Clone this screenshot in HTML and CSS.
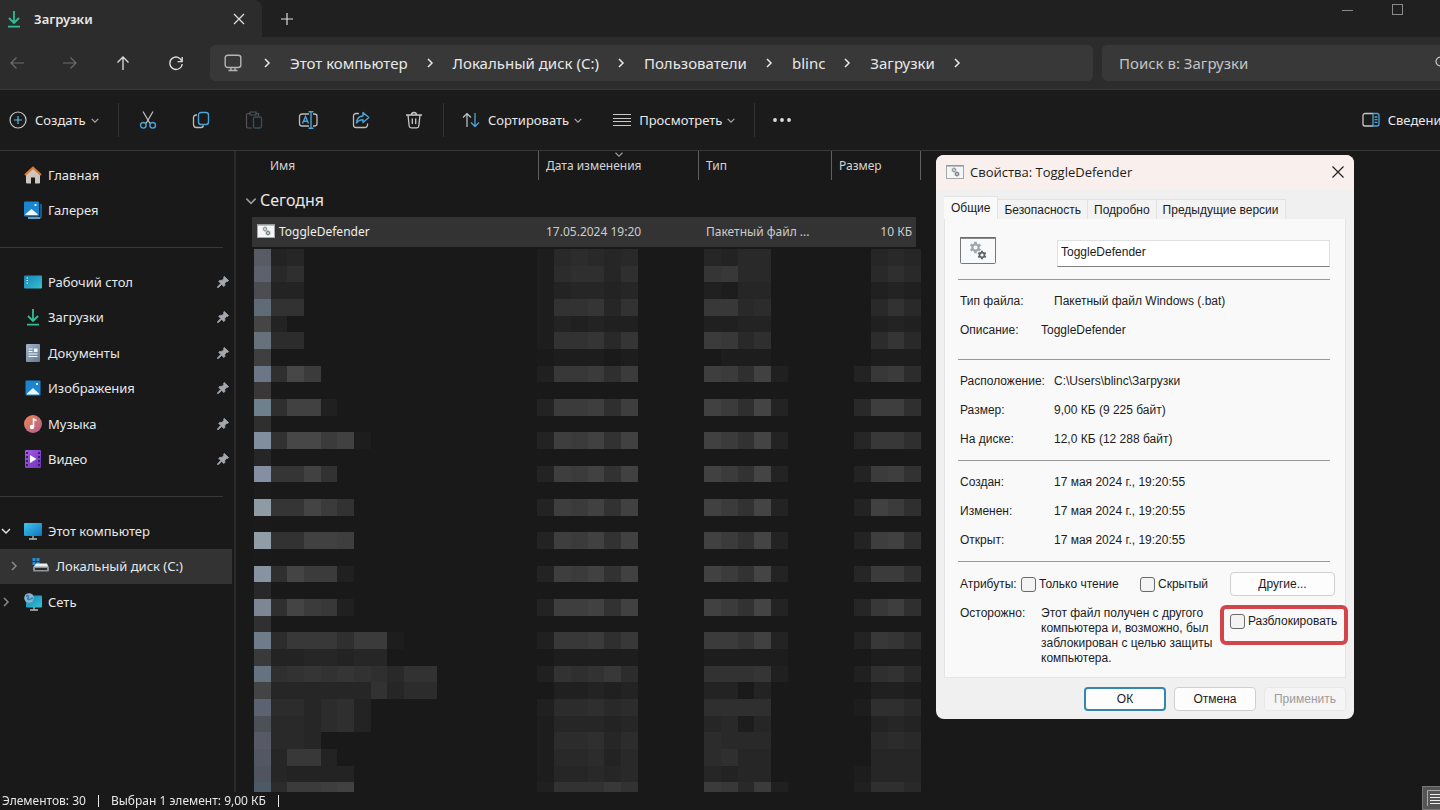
FILE: index.html
```html
<!DOCTYPE html>
<html lang="ru">
<head>
    <meta charset="UTF-8">
    <meta name="viewport" content="width=device-width, initial-scale=1.0">
    <title>Загрузки</title>
    <link rel="stylesheet" href="styles.css">
</head>
<body>
    <!-- shared icons -->
    <svg class="defs" aria-hidden="true">
        <defs>
            <linearGradient id="blueGrad" x1="0" y1="0" x2="1" y2="1">
                <stop offset="0" stop-color="#3fc8ea"/>
                <stop offset="1" stop-color="#0f72c0"/>
            </linearGradient>
            <linearGradient id="tealGrad" x1="0" y1="0" x2="1" y2="1">
                <stop offset="0" stop-color="#1683b5"/>
                <stop offset="1" stop-color="#35c2d4"/>
            </linearGradient>
            <linearGradient id="musicGrad" x1="0" y1="0" x2="1" y2="1">
                <stop offset="0" stop-color="#ee8a55"/>
                <stop offset="1" stop-color="#b05a90"/>
            </linearGradient>
            <linearGradient id="docGrad" x1="0" y1="0" x2="1" y2="1">
                <stop offset="0" stop-color="#a3b5cb"/>
                <stop offset="1" stop-color="#66788f"/>
            </linearGradient>
            <linearGradient id="videoGrad" x1="0" y1="0" x2="1" y2="1">
                <stop offset="0" stop-color="#a65ce8"/>
                <stop offset="1" stop-color="#6c35b5"/>
            </linearGradient>
            <symbol id="chevron-right" viewBox="0 0 8 12"><path d="M2 2l4 4-4 4" fill="none" stroke="currentColor" stroke-width="1.5"/></symbol>
            <symbol id="chevron-down" viewBox="0 0 12 8"><path d="M2 2l4 4 4-4" fill="none" stroke="currentColor" stroke-width="1.4"/></symbol>
            <symbol id="download" viewBox="0 0 18 18"><path d="M9 1v11M4 8l5 5 5-5M3 16.7h12" fill="none" stroke="#2fbf97" stroke-width="1.8"/></symbol>
            <symbol id="pin" viewBox="0 0 12 12"><path d="M7.2 0.4l4.4 4.2-1 .8-.8-.1-2 2 .1 2.2-1 1-2.2-2.1L1.4 11.6l-.9.1.1-.9L3.7 7.4 1.7 5.3l.9-.9 2.400 0 1.800-1.900-.2-1.100z" fill="#a2a8ae" stroke="#a2a8ae" stroke-width="0.8"/></symbol>
            <symbol id="gear" viewBox="-6 -6 12 12">
                <path d="M0-5.200V5.200M-4.500-2.600L4.500 2.600M-4.500 2.600L4.500-2.600" stroke="currentColor" stroke-width="2.400"/>
                <circle r="2.900" fill="#f5f7f8" stroke="currentColor" stroke-width="2"/>
            </symbol>
            <symbol id="batch" viewBox="0 0 18 14">
                <rect x="0.500" y="0.500" width="17" height="13" fill="#f4f6f7" stroke="#a5a8aa"/>
                <path d="M0.500 1h17" stroke="#85898c"/>
                <use href="#gear" x="5" y="2" width="6" height="6" color="#8b9297"/>
                <use href="#gear" x="8" y="6" width="6" height="6" color="#6d7378"/>
            </symbol>
        </defs>
    </svg>

    <div class="window">
        <header class="titlebar">
            <div class="tab">
                <svg class="icon-18"><use href="#download"/></svg>
                <span class="tab-title">Загрузки</span>
                <button class="plain" aria-label="Закрыть вкладку">
                    <svg width="12" height="12" viewBox="0 0 12 12"><path d="M1 1l10 10M11 1L1 11" stroke="#ddd" stroke-width="1.3"/></svg>
                </button>
            </div>
            <button class="plain new-tab" aria-label="Новая вкладка">
                <svg width="12" height="12" viewBox="0 0 12 12"><path d="M6 0v12M0 6h12" stroke="#ddd" stroke-width="1.2"/></svg>
            </button>
            <div class="window-buttons">
                <button class="plain" aria-label="Свернуть"><svg width="12" height="12" viewBox="0 0 12 12"><path d="M0 6.500h11" stroke="#8a8a8a"/></svg></button>
                <button class="plain" aria-label="Развернуть"><svg width="12" height="12" viewBox="0 0 12 12"><rect x="0.500" y="0.500" width="10" height="10" fill="none" stroke="#8a8a8a"/></svg></button>
                <button class="plain" aria-label="Закрыть"><svg width="10" height="10" viewBox="0 0 10 10"><path d="M0 0l10 10M10 0L0 10" stroke="#8a8a8a"/></svg></button>
            </div>
        </header>

        <nav class="navbar">
            <div class="nav-buttons">
                <button class="plain" aria-label="Назад" disabled><svg width="16" height="16" viewBox="0 0 16 16"><path d="M15 8H2M7.500 2.500L2 8l5.500 5.500" fill="none" stroke="#6c6c6c" stroke-width="1.200"/></svg></button>
                <button class="plain" aria-label="Вперед" disabled><svg width="16" height="16" viewBox="0 0 16 16"><path d="M1 8h13M8.500 2.500L14 8l-5.500 5.500" fill="none" stroke="#6c6c6c" stroke-width="1.200"/></svg></button>
                <button class="plain" aria-label="Вверх"><svg width="16" height="16" viewBox="0 0 16 16"><path d="M8 15V2M2.500 7.500L8 2l5.500 5.500" fill="none" stroke="#ddd" stroke-width="1.300"/></svg></button>
                <button class="plain" aria-label="Обновить"><svg width="16" height="16" viewBox="0 0 16 16"><path d="M14 6.500A6.200 6.200 0 1 0 14.200 9M14.200 2v4.600H9.600" fill="none" stroke="#ddd" stroke-width="1.300"/></svg></button>
            </div>
            <div class="address">
                <svg class="address-icon icon-18" viewBox="0 0 18 18"><rect x="1.200" y="1.200" width="15.600" height="12.300" rx="2.500" fill="none" stroke="#b5b5b5" stroke-width="1.400"/><path d="M7 14v2M11 14v2M4.500 16.500h9" stroke="#b5b5b5" stroke-width="1.400"/></svg>
                <svg class="crumb-sep"><use href="#chevron-right"/></svg>
                <a href="#">Этот компьютер</a>
                <svg class="crumb-sep"><use href="#chevron-right"/></svg>
                <a href="#">Локальный диск (C:)</a>
                <svg class="crumb-sep"><use href="#chevron-right"/></svg>
                <a href="#">Пользователи</a>
                <svg class="crumb-sep"><use href="#chevron-right"/></svg>
                <a href="#">blinc</a>
                <svg class="crumb-sep"><use href="#chevron-right"/></svg>
                <a href="#">Загрузки</a>
                <svg class="crumb-sep"><use href="#chevron-right"/></svg>
            </div>
            <div class="search">
                <input type="text" placeholder="Поиск в: Загрузки" aria-label="Поиск">
                <svg width="14" height="14" viewBox="0 0 14 14"><circle cx="5.500" cy="5.500" r="4.500" fill="none" stroke="#ccc" stroke-width="1.200"/><path d="M9 9l4 4" stroke="#ccc"/></svg>
            </div>
        </nav>

        <div class="toolbar">
            <button class="tool create">
                <svg class="icon-18" viewBox="0 0 18 18"><circle cx="9" cy="9" r="8" fill="none" stroke="#c8c8c8" stroke-width="1.200"/><path d="M9 5v8M5 9h8" stroke="#62b8ea" stroke-width="1.200"/></svg>
                Создать
                <svg class="arrow"><use href="#chevron-down"/></svg>
            </button>
            <div class="tool-icons">
                <button class="plain" aria-label="Вырезать"><svg class="icon-18" viewBox="0 0 18 18"><path d="M4 0.500l7 12M14 0.500l-7 12" stroke="#c8c8c8" stroke-width="1.200"/><g fill="none" stroke="#4ba3d8" stroke-width="1.400"><circle cx="4.300" cy="14.300" r="2.800"/><circle cx="13.700" cy="14.300" r="2.800"/></g></svg></button>
                <button class="plain" aria-label="Копировать"><svg class="icon-18" viewBox="0 0 18 18"><path d="M5 4H4a2.500 2.500 0 0 0-2.500 2.500v7A3 3 0 0 0 4.500 16.500H9a2.500 2.500 0 0 0 2.500-2" fill="none" stroke="#bdbdbd" stroke-width="1.300"/><rect x="6.500" y="1.500" width="10" height="12" rx="2.500" fill="none" stroke="#4ba3d8" stroke-width="1.400"/></svg></button>
                <button class="plain" aria-label="Вставить" disabled><svg class="icon-18" viewBox="0 0 18 18"><path d="M5 2.500H3a1.500 1.500 0 0 0-1.500 1.500v11.500A1.500 1.500 0 0 0 3 17h4M11 2.500h2.500V5M5 1h6v3H5z" fill="none" stroke="#555" stroke-width="1.200"/><rect x="8.500" y="6" width="8" height="11" rx="1.500" fill="none" stroke="#36505c" stroke-width="1.300"/></svg></button>
                <button class="plain" aria-label="Переименовать"><svg width="20" height="18" viewBox="0 0 20 18"><path d="M11 3H4A2.500 2.500 0 0 0 1.500 5.500v7A2.500 2.500 0 0 0 4 15h7M15 3h1.500A2.500 2.500 0 0 1 19 5.500v7a2.500 2.500 0 0 1-2.500 2.500H15" fill="none" stroke="#bdbdbd" stroke-width="1.300"/><path d="M13 1v16M10.500 0.700h5M10.500 17.300h5M4.500 12.500l3-7 3 7M5.500 10.200h4" fill="none" stroke="#4ba3d8" stroke-width="1.400"/></svg></button>
                <button class="plain" aria-label="Поделиться"><svg class="icon-18" viewBox="0 0 18 18"><path d="M7 2.500H4A2.500 2.500 0 0 0 1.500 5v9A2.500 2.500 0 0 0 4 16.500h9a2.500 2.500 0 0 0 2.500-2.500v-1.500" fill="none" stroke="#bdbdbd" stroke-width="1.300"/><path d="M11 1.500l5.800 5-5.800 5V8.700c-3 0-4.800.8-6.500 3.300.3-4 2.500-6.800 6.500-7z" fill="none" stroke="#4ba3d8" stroke-width="1.400" stroke-linejoin="round"/></svg></button>
                <button class="plain" aria-label="Удалить"><svg class="icon-18" viewBox="0 0 18 18"><path d="M1 4h16M6.500 4a2.500 2.500 0 0 1 5 0M3 4l1.200 11a2 2 0 0 0 2 1.800h5.600a2 2 0 0 0 2-1.800L15 4M7.300 7.500v5.500M10.700 7.500v5.500" fill="none" stroke="#c8c8c8" stroke-width="1.300"/></svg></button>
            </div>
            <button class="tool">
                <svg class="icon-18" viewBox="0 0 18 18"><path d="M5 16V2.500M1 6.500l4-4 4 4" fill="none" stroke="#c8c8c8" stroke-width="1.200"/><path d="M13 2v13.500M9 11.500l4 4 4-4" fill="none" stroke="#4ba3d8" stroke-width="1.300"/></svg>
                Сортировать
                <svg class="arrow"><use href="#chevron-down"/></svg>
            </button>
            <button class="tool view">
                <svg class="icon-18" viewBox="0 0 18 18"><path d="M0 3.500h18M0 7.500h18M0 10.500h18M0 14.500h18" stroke="#c8c8c8"/></svg>
                Просмотреть
                <svg class="arrow"><use href="#chevron-down"/></svg>
            </button>
            <button class="plain more" aria-label="Дополнительно"><svg width="18" height="4" viewBox="0 0 18 4"><g fill="#ddd"><circle cx="2" cy="2" r="1.900"/><circle cx="9" cy="2" r="1.900"/><circle cx="16" cy="2" r="1.900"/></g></svg></button>
            <button class="tool details">
                <svg class="icon-18" viewBox="0 0 18 18"><path d="M11 2.500H3A2 2 0 0 0 1 4.500v8.500a2 2 0 0 0 2 2h8" fill="none" stroke="#c8c8c8" stroke-width="1.300"/><path d="M11 2.500h4a2 2 0 0 1 2 2v8.500a2 2 0 0 1-2 2h-4zM12.500 6h3M12.500 8.700h3M12.500 11.400h3" fill="none" stroke="#4ba3d8" stroke-width="1.300"/></svg>
                Сведения
            </button>
        </div>

        <div class="main">
            <aside class="sidebar">
                <ul class="group">
                    <li><a href="#"><svg class="icon-18" viewBox="0 0 18 18"><path d="M2 8l7-6 7 6v8.500a1 1 0 0 1-1 1h-4v-6H7v6H3a1 1 0 0 1-1-1z" fill="#ccc5c0"/><path d="M1 9l8-7.300L17 9" fill="none" stroke="#dc7a2c" stroke-width="2.200"/></svg>Главная</a></li>
                    <li><a href="#"><svg class="icon-18" viewBox="0 0 18 18"><path d="M4 17h12a1 1 0 0 0 1-1V3" fill="none" stroke="#1470a8" stroke-width="1.600"/><path d="M4 17h12" stroke="#bfe0f2"/><rect width="15" height="15" y="0.500" rx="1" fill="#1b85d0"/><path d="M1.500 14v-1l6-5 6 5v1z" fill="#eef7fc"/><circle cx="11.500" cy="4" r="1.100" fill="#fff"/></svg>Галерея</a></li>
                </ul>
                <hr>
                <ul class="group">
                    <li><a href="#"><svg class="icon-18" viewBox="0 0 18 18"><rect y="2.500" width="18" height="13" rx="1" fill="url(#tealGrad)"/><path d="M2.500 5h1.500M2.500 7.500h1.500M2.500 10h1.500" stroke="#dff" stroke-width="1.200"/></svg>Рабочий стол</a><svg class="pin"><use href="#pin"/></svg></li>
                    <li><a href="#"><svg class="icon-18"><use href="#download"/></svg>Загрузки</a><svg class="pin"><use href="#pin"/></svg></li>
                    <li><a href="#"><svg class="icon-18" viewBox="0 0 18 18"><rect x="2" width="14" height="18" rx="1" fill="url(#docGrad)"/><path d="M4.500 5h4M4.500 7.500h4M4.500 10h9M4.500 12.500h9" stroke="#f2f6fa" stroke-width="1.200"/><path d="M10 4.500h3.500v3.500H10z" fill="#f2f6fa"/></svg>Документы</a><svg class="pin"><use href="#pin"/></svg></li>
                    <li><a href="#"><svg class="icon-18" viewBox="0 0 18 18"><rect x="1.500" y="1.500" width="15" height="15" rx="1" fill="#1b85d0"/><path d="M3 15.500v-1l6-5.500 6 5.500v1z" fill="#eef7fc"/><circle cx="13" cy="5" r="1.100" fill="#fff"/></svg>Изображения</a><svg class="pin"><use href="#pin"/></svg></li>
                    <li><a href="#"><svg class="icon-18" viewBox="0 0 18 18"><circle cx="9" cy="9" r="9" fill="url(#musicGrad)"/><circle cx="8" cy="12" r="2.200" fill="#fff"/><path d="M9.500 12V4l3 1.700" fill="none" stroke="#fff" stroke-width="1.500"/></svg>Музыка</a><svg class="pin"><use href="#pin"/></svg></li>
                    <li><a href="#"><svg class="icon-18" viewBox="0 0 18 18"><rect x="1" width="16" height="18" rx="1" fill="url(#videoGrad)"/><path d="M3 2v14M15 2v14" stroke="#3c1c70" stroke-width="2" stroke-dasharray="2 2"/><path d="M6 5l6.500 4L6 13z" fill="#fff"/></svg>Видео</a><svg class="pin"><use href="#pin"/></svg></li>
                </ul>
                <hr>
                <ul class="group tree">
                    <li><svg class="toggle"><use href="#chevron-down"/></svg><a href="#"><svg class="icon-18" viewBox="0 0 18 18"><rect y="1" width="18" height="13" rx="1" fill="url(#blueGrad)"/><path d="M9 14v2.500M5 17h8" stroke="#b5bcc2" stroke-width="1.300"/></svg>Этот компьютер</a></li>
                    <li class="nested selected"><svg class="toggle dim"><use href="#chevron-right"/></svg><a href="#"><svg class="icon-18" viewBox="0 0 18 18"><path d="M0.500 1h3v3h-3zM4.500 1h3v3h-3zM0.500 5h3v3h-3zM4.500 5h3v3h-3z" fill="#2a8fd8"/><path d="M4 6.500h11l1.500 3.500h-15z" fill="#eceff1"/><rect x="1" y="9.500" width="16" height="5" rx="1" fill="#8d9499"/><path d="M3 12h12" stroke="#2c2c2c" stroke-width="2"/></svg>Локальный диск (C:)</a></li>
                    <li><svg class="toggle dim"><use href="#chevron-right"/></svg><a href="#"><svg class="icon-18" viewBox="0 0 18 18"><rect x="2" y="2.500" width="16" height="12" rx="1" fill="url(#tealGrad)"/><circle cx="5" cy="5" r="4.800" fill="#8ab4cd"/><path d="M2 3.500c2-2.500 3 0 2 1.500s1 2 2.500 1 2-1 2.500 0" fill="none" stroke="#2b7fae" stroke-width="1.500"/><path d="M10 14v2.500M6 17h8" stroke="#b5bcc2" stroke-width="1.300"/></svg>Сеть</a></li>
                </ul>
            </aside>

            <section class="files">
                <table>
                    <colgroup>
                        <col class="col-name">
                        <col class="col-date">
                        <col class="col-type">
                        <col class="col-size">
                    </colgroup>
                    <thead>
                        <tr>
                            <th>Имя</th>
                            <th>Дата изменения<svg class="sort-mark"><use href="#chevron-down"/></svg></th>
                            <th>Тип</th>
                            <th>Размер</th>
                        </tr>
                    </thead>
                    <tbody>
                        <tr class="group-row">
                            <td colspan="4"><svg width="14" height="10"><use href="#chevron-down"/></svg>Сегодня</td>
                        </tr>
                        <tr class="file-row">
                            <td><svg width="18" height="14"><use href="#batch"/></svg>ToggleDefender</td>
                            <td>17.05.2024 19:20</td>
                            <td>Пакетный файл ...</td>
                            <td>10 КБ</td>
                        </tr>
                    </tbody>
                </table>
                <div class="mosaic">
                    <canvas id="mosaic" width="40" height="33"></canvas>
                </div>
            </section>
        </div>

        <footer class="statusbar">
            <span>Элементов: 30</span>
            <span>Выбран 1 элемент: 9,00 КБ</span>
            <button class="plain view-switch" aria-label="Таблица"><svg width="14" height="16" viewBox="0 0 14 16"><path d="M0.500 16V0.500H14" fill="none" stroke="#aaa"/><path d="M3 4.500h11M3 7.500h11M3 10.500h11M3 13.500h11" stroke="#eee"/></svg></button>
        </footer>
    </div>

    <div class="dialog" role="dialog" aria-labelledby="dialogTitle">
        <div class="dialog-title">
            <svg width="18" height="14"><use href="#batch"/></svg>
            <span id="dialogTitle">Свойства: ToggleDefender</span>
            <button class="plain" aria-label="Закрыть"><svg width="12" height="12" viewBox="0 0 12 12"><path d="M0.500 0.500l11 11M11.500 0.500l-11 11" stroke="#222" stroke-width="1.200"/></svg></button>
        </div>
        <div class="dialog-tabs">
            <button class="active">Общие</button>
            <button>Безопасность</button>
            <button>Подробно</button>
            <button>Предыдущие версии</button>
        </div>
        <div class="panel">
            <div class="file-head">
                <svg width="36" height="28" viewBox="0 0 36 28"><rect x="0.500" y="0.500" width="35" height="26" rx="1" fill="#f7f9fa" stroke="#777"/><path d="M0 1h36" stroke="#666" stroke-width="1.500"/><use href="#gear" x="9" y="4" width="13" height="13" color="#a1a7ab"/><use href="#gear" x="17" y="13" width="10" height="10" color="#5d6368"/></svg>
                <input type="text" value="ToggleDefender" aria-label="Имя файла">
            </div>
            <hr>
            <dl class="loose">
                <div><dt>Тип файла:</dt><dd>Пакетный файл Windows (.bat)</dd></div>
                <div class="short"><dt>Описание:</dt><dd>ToggleDefender</dd></div>
            </dl>
            <hr>
            <dl>
                <div><dt>Расположение:</dt><dd>C:\Users\blinc\Загрузки</dd></div>
                <div><dt>Размер:</dt><dd>9,00 КБ (9 225 байт)</dd></div>
                <div><dt>На диске:</dt><dd>12,0 КБ (12 288 байт)</dd></div>
            </dl>
            <hr>
            <dl>
                <div><dt>Создан:</dt><dd>17 мая 2024 г., 19:20:55</dd></div>
                <div><dt>Изменен:</dt><dd>17 мая 2024 г., 19:20:55</dd></div>
                <div><dt>Открыт:</dt><dd>17 мая 2024 г., 19:20:55</dd></div>
            </dl>
            <hr>
            <div class="attributes">
                <span class="attributes-label">Атрибуты:</span>
                <label class="readonly"><input type="checkbox">Только чтение</label>
                <label><input type="checkbox">Скрытый</label>
                <button class="btn">Другие...</button>
            </div>
            <div class="warning">
                <span class="warning-label">Осторожно:</span>
                <p>Этот файл получен с другого компьютера и, возможно, был заблокирован с целью защиты компьютера.</p>
                <label class="unblock"><input type="checkbox">Разблокировать</label>
            </div>
        </div>
        <div class="dialog-buttons">
            <button class="btn default">ОК</button>
            <button class="btn">Отмена</button>
            <button class="btn" disabled>Применить</button>
        </div>
    </div>

    <script src="main.js"></script>
</body>
</html>
```

FILE: styles.css
```css
*,
*::after {
    box-sizing: border-box;
}

body {
    margin: 0;
    height: 100vh;
    overflow: hidden;
    position: relative;
    background-color: #191919;
    color: #e8e8e8;
    font-family: "Noto Sans", "Open Sans", sans-serif;
    font-size: 13px;
}

button,
input {
    font: inherit;
    color: inherit;
}

a {
    color: inherit;
    text-decoration: none;
}

svg {
    flex-shrink: 0;
}

.defs {
    position: absolute;
    width: 0;
    height: 0;
}

.plain {
    display: flex;
    align-items: center;
    justify-content: center;
    padding: 0;
    border: 0;
    background: none;
}

.icon-18 {
    width: 18px;
    height: 18px;
}

/* the window runs a little past the right edge of the screen */
.window {
    display: flex;
    flex-direction: column;
    width: calc(100% + 33px);
    height: 100%;
}

.titlebar {
    display: flex;
    height: 37px;
    background-color: #202020;
}

.tab {
    display: flex;
    align-items: center;
    width: 262px;
    padding: 0 17px 0 5px;
    gap: 11px;
    background-color: #2c2c2c;
    border-radius: 0 8px 0 0;
    font-weight: 600;
}

.tab-title {
    flex: 1;
}

.new-tab {
    width: 50px;
}

.window-buttons {
    display: flex;
    height: 19px;
    margin-left: auto;
}

.window-buttons button {
    width: 50px;
}

.navbar {
    display: flex;
    align-items: center;
    height: 53px;
    padding-right: 16px;
    background-color: #2c2c2c;
    border-bottom: 1px solid #383838;
    font-size: 15px;
}

.nav-buttons {
    display: flex;
    gap: 37px;
    width: 210px;
    padding-left: 9px;
}

.address {
    display: flex;
    align-items: center;
    flex: 1;
    height: 36px;
    padding-left: 14px;
    background-color: #383838;
    border-radius: 5px;
    white-space: nowrap;
}

.address-icon {
    margin-right: 3px;
}

.crumb-sep {
    width: 8px;
    height: 12px;
    margin: 0 19px 0 18px;
}

.search {
    display: flex;
    align-items: center;
    width: 355px;
    height: 36px;
    margin-left: 9px;
    padding: 0 8px 0 17px;
    background-color: #383838;
    border-radius: 5px;
}

.search input {
    flex: 1;
    padding: 0;
    border: 0;
    outline: 0;
    background: none;
}

.search input::placeholder {
    color: #c4c4c4;
    opacity: 1;
}

.toolbar {
    display: flex;
    align-items: center;
    height: 61px;
    background-color: #1b1b1b;
    border-bottom: 1px solid #383838;
}

.tool {
    display: flex;
    align-items: center;
    gap: 8px;
    padding: 0;
    border: 0;
    background: none;
    white-space: nowrap;
}

.arrow {
    width: 10px;
    height: 7px;
    margin-left: -4px;
    color: #aaa;
}

.create {
    width: 118px;
    padding-left: 9px;
}

.tool-icons {
    display: grid;
    grid-template-columns: repeat(6, 1fr);
    align-items: center;
    width: 326px;
    height: 34px;
    margin-right: 18px;
    padding: 0 2px;
    border: solid #333;
    border-width: 0 1px;
}

.view {
    margin-left: 30px;
}

.more {
    height: 34px;
    margin-left: 18px;
    padding-left: 18px;
    border-left: 1px solid #333;
}

.details {
    margin-left: auto;
    padding-right: 24px;
}

.main {
    display: flex;
    flex: 1;
    min-height: 0;
}

.sidebar {
    width: 236px;
    padding-top: 6px;
    border-right: 2px solid #2a2a2a;
}

.group {
    display: grid;
    grid-auto-rows: 1fr;
    height: 213px;
    margin: 0;
    padding: 0;
    list-style: none;
}

.group:first-child {
    height: 71px;
}

.group li {
    display: flex;
    align-items: center;
    padding: 0 5px 0 24px;
}

.group a {
    display: flex;
    align-items: center;
    gap: 6px;
    flex: 1;
}

.sidebar hr {
    height: 1px;
    margin: 19px 11px 16px 0;
    border: 0;
    background-color: #383838;
}

.pin {
    width: 12px;
    height: 12px;
}

.tree {
    height: 107px;
}

.group.tree li {
    margin-right: 2px;
    padding-left: 0;
}

.toggle {
    width: 12px;
    height: 12px;
    margin-right: 12px;
}

.dim {
    color: #8a8a8a;
}

.group.tree .nested {
    padding-left: 8px;
}

.selected {
    background-color: #333;
}

.files {
    display: flex;
    flex-direction: column;
    width: 685px;
    padding-left: 8px;
}

.files table {
    width: 677px;
    table-layout: fixed;
    border-collapse: separate;
    border-spacing: 0;
}

.col-name {
    width: 295px;
}

.col-date {
    width: 160px;
}

.col-type {
    width: 133px;
}

.files th {
    position: relative;
    height: 29px;
    padding: 0 0 1px 7px;
    border-right: 1px solid #606060;
    color: #d5d5d5;
    font-size: 12px;
    font-weight: normal;
    text-align: left;
}

.files th:first-child {
    padding-left: 26px;
}

.sort-mark {
    position: absolute;
    top: 0;
    left: calc(50% - 6px);
    width: 12px;
    height: 7px;
    color: #999;
}

.group-row td {
    height: 37px;
    padding: 2px 0 0;
    font-size: 16px;
}

.group-row svg {
    margin-right: 2px;
    color: #999;
}

.file-row td {
    height: 30px;
    padding: 0 0 1px 7px;
    background-color: #333;
    background-clip: padding-box;
    color: #ccc;
    font-size: 12px;
}

.file-row td:first-child {
    padding-left: 5px;
    border-left: 8px solid transparent;
    color: #f0f0f0;
}

.file-row td:last-child {
    padding-right: 4px;
    border-right: 5px solid transparent;
    text-align: right;
}

.file-row svg {
    margin-right: 4px;
    vertical-align: -2px;
}

/* censored part of the list */
.mosaic {
    flex: 1;
    min-height: 0;
    margin: 2px 0 0 10px;
    overflow: hidden;
}

.mosaic canvas {
    display: block;
    width: 667px;
    height: 550px;
    image-rendering: pixelated;
}

.statusbar {
    display: flex;
    align-items: center;
    height: 18px;
    padding: 0 0 0 2px;
    font-size: 12px;
}

.statusbar span {
    margin-right: 12px;
    padding-right: 12px;
    border-right: 1px solid #e8e8e8;
    line-height: 12px;
}

.view-switch {
    width: 51px;
    height: 24px;
    margin: -6px 0 0 auto;
    padding-left: 4px;
    justify-content: flex-start;
    background-color: #555;
    border: 1px solid #777;
}

.dialog {
    position: absolute;
    top: 155px;
    right: 86px;
    width: 418px;
    padding: 0 8px 8px;
    overflow: hidden;
    background-color: #f0f0f0;
    border-radius: 8px;
    color: #1c1c1c;
    font-family: "Liberation Sans", Arial, sans-serif;
    font-size: 12px;
}

.dialog-title {
    display: flex;
    align-items: center;
    gap: 6px;
    height: 34px;
    margin: 0 -8px;
    padding: 0 10px;
    background-color: #f9efed;
    font-family: "Open Sans", "Noto Sans", sans-serif;
    font-size: 13px;
}

.dialog-title span {
    flex: 1;
}

.dialog-tabs {
    display: flex;
    align-items: flex-end;
    height: 30px;
}

.dialog-tabs button {
    height: 20px;
    padding: 0 6px;
    background-color: #f3f3f3;
    border: 1px solid #e2e2e2;
    border-left: 0;
    border-bottom: 0;
    white-space: nowrap;
}

.dialog-tabs .active {
    height: 23px;
    padding: 0 7px;
    background-color: #f9f9f9;
}

.panel {
    height: 459px;
    margin-bottom: 9px;
    padding: 18px 15px 0 13px;
    background-color: #f9f9f9;
    border: 1px solid #e5e5e5;
    border-top: 0;
}

.file-head {
    display: flex;
    justify-content: space-between;
    align-items: flex-start;
    height: 42px;
    padding-left: 2px;
}

.file-head input {
    width: 273px;
    height: 27px;
    margin-top: 3px;
    padding: 0 3px 3px;
    background-color: #fff;
    border: 1px solid #e0e0e0;
    border-bottom-color: #808080;
}

.panel hr {
    height: 1px;
    margin: 0;
    border: 0;
    background-color: #999;
}

.panel dl {
    margin: 0;
    padding: 6px 0 7px 2px;
}

.panel .loose {
    padding-bottom: 15px;
}

.panel dl div {
    display: flex;
    align-items: center;
    height: 29px;
}

.panel dt {
    width: 94px;
}

.panel dd {
    margin: 0;
}

.panel .short dt {
    width: 81px;
}

.attributes,
.attributes label,
.unblock {
    display: flex;
    align-items: center;
    white-space: nowrap;
}

.attributes {
    height: 24px;
    margin: 10px -5px 10px 0;
    padding-left: 2px;
}

.attributes-label {
    width: 61px;
}

.attributes .readonly {
    width: 119px;
}

input[type="checkbox"] {
    appearance: none;
    flex-shrink: 0;
    width: 15px;
    height: 15px;
    margin: 0 3px 0 0;
    background-color: #f3f3f3;
    border: 1px solid #6a6a6a;
    border-radius: 3px;
}

.btn {
    width: 82px;
    height: 24px;
    padding: 0;
    background-color: #fdfdfd;
    border: 1px solid #d0d0d0;
    border-radius: 4px;
}

.attributes .btn {
    width: 105px;
    margin-left: auto;
}

.warning {
    position: relative;
    display: flex;
    align-items: flex-start;
    padding-left: 2px;
    line-height: 15px;
}

.warning-label {
    width: 81px;
}

.warning p {
    width: 180px;
    margin: 0;
}

.unblock {
    margin: 8px -8px 0 9px;
}

/* red marker around the check box */
.warning::after {
    content: "";
    position: absolute;
    top: -1px;
    right: -18px;
    width: 128px;
    height: 40px;
    border: 4px solid #d2464b;
    border-radius: 6px;
}

.dialog-buttons {
    display: flex;
    justify-content: flex-end;
    gap: 8px;
}

.btn.default {
    border: 2px solid #3685ad;
}

.btn:disabled {
    border-color: #e8e8e8;
    background-color: #f5f5f5;
    color: #9c9c9c;
}
```

FILE: main.js
```js
// one row per strip: icon colour, name, date, type and size blocks
// each hex digit is a grey level, '.' leaves the block empty
const rows = [
    ['#585b64', '34', '156545', '4355', '.454'],
    ['#5c616d', '57', '167747', '9a55', '.575'],
    ['#4b4d50', '33', '134434', '2144', '.232'],
    ['#5f6b76', '88', '188948', 'aa56', '.585'],
    ['#454546', '3', '132322', '2233', '.232'],
    ['#66717b', '66', '188959', 'ba57', '.695'],
    ['#3f3f3f', '', '011101', '.111', '.111'],
    ['#6b7786', '7fb', '2aab7b', 'cb7d2', '3ab6'],
    ['#393737', '', '', '', ''],
    ['#6f808d', '7dd2', '3bbc7c', 'db7e3', '5cc7'],
    ['#2f2f2f', '', '', '', ''],
    ['#818e9e', '8ffbd1', '3cbd8d', 'db8e3', '4aa7'],
    ['#262626', '', '', '', ''],
    ['#8490a1', '99d8', '3cbd8d', 'db8e3', '3bc8'],
    ['#1c1c1c', '', '', '', ''],
    ['#8e9ba5', '99eb8', '3cbd8d', 'db8e3', '3db7'],
    ['#1a1a1a', '', '', '', ''],
    ['#919da6', '88ddc', '3cbd8d', 'db8e3', '3cd7'],
    ['#1a1a1a', '', '', '', ''],
    ['#8793a0', '7ebb2', '3cbd8d', 'db8e3', '4bb7'],
    ['#282828', '', '', '', ''],
    ['#7c8695', '7eba2', '3ccd8d', 'db8e3', '4ac7'],
    ['#303030', '', '', '', ''],
    ['#6f7b89', '6aaa7bb1', '2aab7a', 'bb9d3', '3a96'],
    ['#3a3a3a', '3344344', '.11111', '11111', '.111'],
    ['#65727f', '7898987588', '2878a6', '88892', '2785'],
    ['#444444', '4444448466', '.22323', '3303', '.221'],
    ['#5b6373', '664673', '266756', '7777', '1775'],
    ['#4c5057', '554673', '144434', '4514', '.343'],
    ['#575a66', '554', '166746', '6555', '.565'],
    ['#525863', '4aa3', '155635', '6744', '.444'],
    ['#50545f', '43333', '144545', '4344', '1444'],
    ['#4c5a68', '6bbcd', '2888a8', 'ba5b2', '2775']
];
const starts = [1, 17, 27, 36];

const ctx = document.getElementById('mosaic').getContext('2d');

rows.forEach(function (row, y) {
    ctx.fillStyle = row[0];
    ctx.fillRect(0, y, 1, 1);
    starts.forEach(function (start, part) {
        [...row[part + 1]].forEach(function (level, i) {
            if (level === '.') return;
            const grey = 26 + parseInt(level, 16) * 3;
            ctx.fillStyle = `rgb(${grey}, ${grey}, ${grey})`;
            ctx.fillRect(start + i, y, 1, 1);
        });
    });
});
```
